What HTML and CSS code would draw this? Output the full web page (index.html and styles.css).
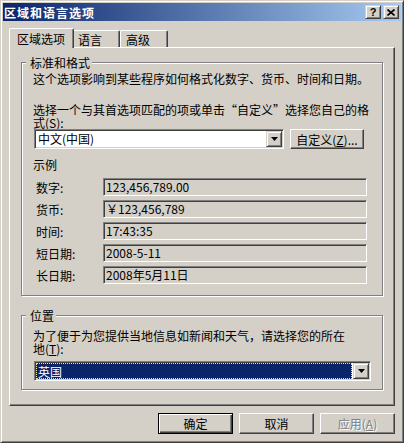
FILE: index.html
```html
<!DOCTYPE html>
<html lang="zh-CN">
<head>
  <meta charset="UTF-8">
  <title>区域和语言选项</title>
  <link rel="stylesheet" href="styles.css">
</head>
<body>
  <div class="window">
    <div class="titlebar">
      <span class="title">区域和语言选项</span>
      <div class="caption-buttons">
        <button class="cap-btn raised help">?</button>
        <button class="cap-btn raised">
          <svg width="8" height="7" viewBox="0 0 8 7"><path d="M0.5 0.5L7.5 6.5M7.5 0.5L0.5 6.5" stroke="#000" stroke-width="1.6"/></svg>
        </button>
      </div>
    </div>

    <div class="client">
      <div class="tabs">
        <div class="tab active">区域选项</div>
        <div class="tab">语言</div>
        <div class="tab">高级</div>
      </div>

      <div class="tab-page">
        <div class="group group-format">
          <span class="group-title">标准和格式</span>
          <p class="desc">这个选项影响到某些程序如何格式化数字、货币、时间和日期。</p>
          <p class="prompt">选择一个与其首选项匹配的项或单击“自定义”选择您自己的格<br>式(<u>S</u>):</p>
          <div class="combo-row">
            <div class="combo sunken combo-format">
              <span class="combo-text">中文(中国)</span>
              <span class="drop-btn raised">
                <svg width="7" height="4" viewBox="0 0 7 4"><path d="M0 0h7L3.5 4z" fill="#000"/></svg>
              </span>
            </div>
            <button class="btn">自定义(<u>Z</u>)...</button>
          </div>

          <div class="samples-title">示例</div>
          <div class="samples">
            <div class="sample-row"><span class="sample-label">数字:</span><span class="sample-value sunken">123,456,789.00</span></div>
            <div class="sample-row"><span class="sample-label">货币:</span><span class="sample-value sunken">￥123,456,789</span></div>
            <div class="sample-row"><span class="sample-label">时间:</span><span class="sample-value sunken">17:43:35</span></div>
            <div class="sample-row"><span class="sample-label">短日期:</span><span class="sample-value sunken">2008-5-11</span></div>
            <div class="sample-row"><span class="sample-label">长日期:</span><span class="sample-value sunken">2008年5月11日</span></div>
          </div>
        </div>

        <div class="group group-location">
          <span class="group-title">位置</span>
          <p class="desc">为了便于为您提供当地信息如新闻和天气，请选择您的所在<br>地(<u>T</u>):</p>
          <div class="combo sunken combo-location">
            <span class="combo-text selected">英国</span>
            <span class="drop-btn raised">
              <svg width="7" height="4" viewBox="0 0 7 4"><path d="M0 0h7L3.5 4z" fill="#000"/></svg>
            </span>
          </div>
        </div>
      </div>

      <div class="dialog-buttons">
        <button class="btn default">确定</button>
        <button class="btn">取消</button>
        <button class="btn disabled">应用(<u>A</u>)</button>
      </div>
    </div>
  </div>
</body>
</html>
```

FILE: styles.css
```css
* {
  box-sizing: border-box;
}
html, body {
  margin: 0;
  padding: 0;
}
body {
  width: 404px;
  height: 443px;
  overflow: hidden;
  background: #d4d0c8;
  font-family: "Noto Sans CJK SC", "Noto Sans", sans-serif;
  font-size: 12px;
  line-height: 13px;
  color: #000;
}
p {
  margin: 0;
}
button {
  font: inherit;
  color: inherit;
  padding: 0;
  margin: 0;
  background: #d4d0c8;
}

/* classic 3d edges */
.raised {
  border: 1px solid;
  border-color: #d4d0c8 #404040 #404040 #d4d0c8;
  box-shadow: inset 1px 1px #fff, inset -1px -1px #808080;
}
.sunken {
  border: 1px solid;
  border-color: #808080 #fff #fff #808080;
  box-shadow: inset 1px 1px #404040, inset -1px -1px #d4d0c8;
}

.window {
  width: 404px;
  height: 443px;
  border: 1px solid;
  border-color: #d4d0c8 #404040 #404040 #d4d0c8;
  box-shadow: inset 1px 1px #fff, inset -1px -1px #808080;
  padding: 2px;
  display: flex;
  flex-direction: column;
}

.titlebar {
  height: 18px;
  display: flex;
  align-items: center;
  padding: 0 2px 0 1px;
  background: linear-gradient(to right, #0a246a, #a6caf0);
}
.title {
  color: #fff;
  font-weight: bold;
  letter-spacing: 1px;
}
.caption-buttons {
  margin-left: auto;
  display: flex;
  gap: 2px;
}
.cap-btn {
  width: 16px;
  height: 14px;
  display: flex;
  align-items: center;
  justify-content: center;
}
.cap-btn.help {
  font-family: "Liberation Sans", sans-serif;
  font-weight: bold;
  font-size: 11px;
  line-height: 11px;
}

.client {
  flex: 1;
  padding: 7px 6px 0 6px;
  display: flex;
  flex-direction: column;
}

/* tabs */
.tabs {
  display: flex;
  height: 19px;
  padding-left: 2px;
}
.tab {
  position: relative;
  min-width: 48px;
  height: 17px;
  margin-top: 2px;
  padding: 2px 5px 0 5px;
  border-top: 1px solid #fff;
  border-left: 1px solid #fff;
  border-right: 1px solid #404040;
  border-radius: 2px 2px 0 0;
  box-shadow: inset -1px 0 #808080;
}
.tab.active {
  z-index: 1;
  height: 20px;
  margin: 0 -2px -1px -2px;
  padding: 3px 8px 0 7px;
  background: #d4d0c8;
}

.tab-page {
  width: 386px;
  height: 359px;
  border-top: 1px solid #fff;
  border-left: 1px solid #fff;
  border-right: 1px solid #404040;
  border-bottom: 1px solid #404040;
  box-shadow: inset -1px -1px #808080;
  padding: 14px 0 0 11px;
}

/* group boxes */
.group {
  position: relative;
  width: 362px;
  border: 1px solid #808080;
  box-shadow: inset 1px 1px #fff, 1px 1px #fff;
  padding-left: 11px;
}
.group-title {
  position: absolute;
  top: -7px;
  left: 4px;
  padding: 0 2px 0 4px;
  background: #d4d0c8;
}
.group-format {
  padding-top: 9px;
  padding-bottom: 11px;
}
.group-location {
  margin-top: 19px;
  padding-top: 13px;
  padding-bottom: 8px;
}
.prompt {
  margin-top: 18px;
}

/* combo boxes */
.combo-row {
  display: flex;
  gap: 6px;
}
.combo {
  display: flex;
  align-items: center;
  height: 20px;
  margin-left: 1px;
  padding: 1px;
  background: #fff;
}
.combo-format {
  width: 250px;
}
.combo-location {
  width: 337px;
  margin-top: 6px;
}
.combo-text {
  flex: 1;
  height: 16px;
  line-height: 15px;
  padding-left: 2px;
}
.combo-text.selected {
  background: #0a246a;
  color: #fff;
  border: 1px dotted #e8e8a0;
  padding-left: 1px;
  margin-right: 1px;
}
.drop-btn {
  width: 16px;
  height: 16px;
  display: flex;
  align-items: center;
  justify-content: center;
  background: #d4d0c8;
}

/* push buttons */
.btn {
  width: 74px;
  height: 20px;
  border: 1px solid;
  border-color: #fff #404040 #404040 #fff;
  box-shadow: inset -1px -1px #808080;
}
.dialog-buttons .btn {
  width: 75px;
  height: 21px;
}
.btn.default {
  border-color: #000;
  box-shadow: inset 1px 1px #fff, inset -1px -1px #404040, inset -2px -2px #808080;
}
.btn.disabled {
  color: #808080;
  text-shadow: 1px 1px #fff;
}

/* samples */
.samples-title {
  margin-top: 9px;
}
.samples {
  margin-top: 7px;
  display: flex;
  flex-direction: column;
  gap: 4px;
}
.sample-row {
  display: flex;
  align-items: center;
  padding-left: 3px;
}
.sample-label {
  width: 67px;
}
.sample-value {
  width: 264px;
  height: 18px;
  line-height: 15px;
  padding-left: 2px;
  background: #d4d0c8;
}

.dialog-buttons {
  display: flex;
  justify-content: flex-end;
  gap: 6px;
  margin-top: 7px;
}
```
